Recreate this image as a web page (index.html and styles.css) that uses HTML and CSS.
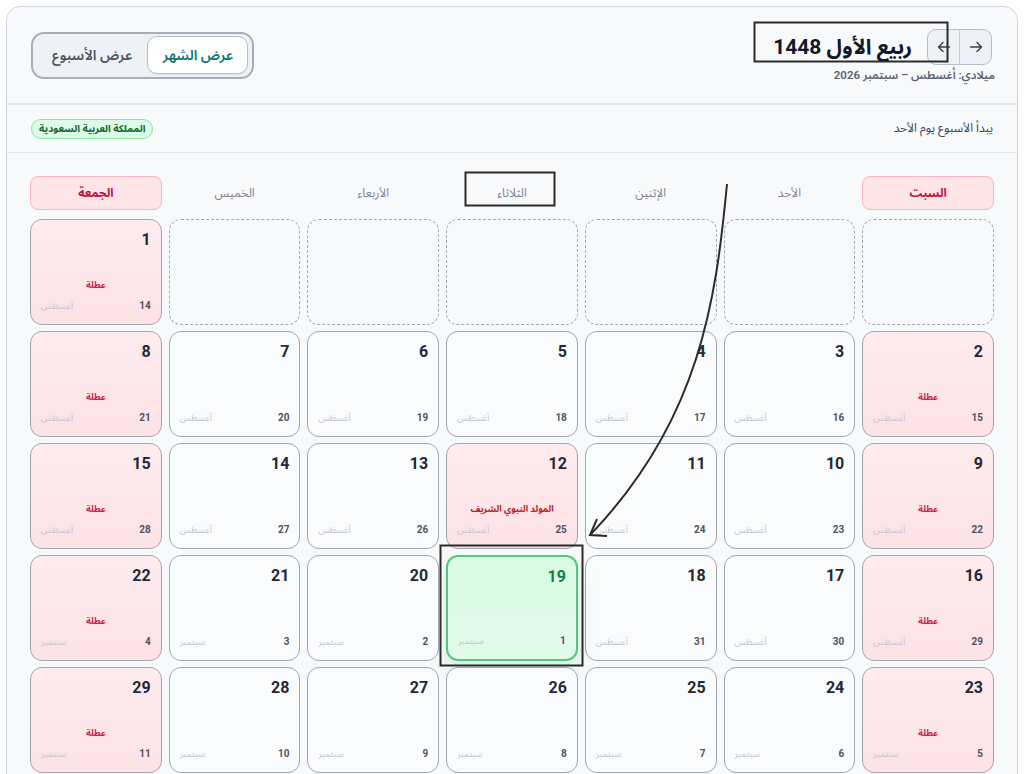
FILE: index.html
```html
<!DOCTYPE html>
<html lang="ar">
<head>
<meta charset="utf-8">
<title>التقويم الهجري</title>
<link rel="stylesheet" href="styles.css">
</head>
<body>
<div class="panel" dir="rtl">
  <header class="top">
    <div class="title-block">
      <div class="title-row">
        <div class="nav">
          <button class="nav-btn" aria-label="السابق"><svg width="14" height="14" viewBox="0 0 14 14"><path d="M1.5 7 H12.5 M8 2.5 L12.5 7 L8 11.5" fill="none" stroke="#374151" stroke-width="1.4" stroke-linecap="round" stroke-linejoin="round"/></svg></button>
          <button class="nav-btn" aria-label="التالي"><svg width="14" height="14" viewBox="0 0 14 14"><path d="M12.5 7 H1.5 M6 2.5 L1.5 7 L6 11.5" fill="none" stroke="#374151" stroke-width="1.4" stroke-linecap="round" stroke-linejoin="round"/></svg></button>
        </div>
        <h1 class="title">ربيع الأول 1448</h1>
      </div>
      <div class="sub">ميلادي: أغسطس – سبتمبر 2026</div>
    </div>
    <div class="toggle">
      <button class="tg active">عرض الشهر</button>
      <button class="tg">عرض الأسبوع</button>
    </div>
  </header>
  <div class="info">
    <span class="info-text">يبدأ الأسبوع يوم الأحد</span>
    <span class="badge">المملكة العربية السعودية</span>
  </div>
  <main class="cal">
    <div class="weekdays">
      <div class="wd wd-off">السبت</div>
      <div class="wd">الأحد</div>
      <div class="wd">الإثنين</div>
      <div class="wd">الثلاثاء</div>
      <div class="wd">الأربعاء</div>
      <div class="wd">الخميس</div>
      <div class="wd wd-off">الجمعة</div>
    </div>
    <div class="grid">
      <div class="cell empty"></div>
      <div class="cell empty"></div>
      <div class="cell empty"></div>
      <div class="cell empty"></div>
      <div class="cell empty"></div>
      <div class="cell empty"></div>
      <div class="cell off"><span class="hn">1</span><span class="lbl">عطلة</span><div class="foot"><span class="gn">14</span><span class="gm">أغسطس</span></div></div>

      <div class="cell off"><span class="hn">2</span><span class="lbl">عطلة</span><div class="foot"><span class="gn">15</span><span class="gm">أغسطس</span></div></div>
      <div class="cell"><span class="hn">3</span><div class="foot"><span class="gn">16</span><span class="gm">أغسطس</span></div></div>
      <div class="cell"><span class="hn">4</span><div class="foot"><span class="gn">17</span><span class="gm">أغسطس</span></div></div>
      <div class="cell"><span class="hn">5</span><div class="foot"><span class="gn">18</span><span class="gm">أغسطس</span></div></div>
      <div class="cell"><span class="hn">6</span><div class="foot"><span class="gn">19</span><span class="gm">أغسطس</span></div></div>
      <div class="cell"><span class="hn">7</span><div class="foot"><span class="gn">20</span><span class="gm">أغسطس</span></div></div>
      <div class="cell off"><span class="hn">8</span><span class="lbl">عطلة</span><div class="foot"><span class="gn">21</span><span class="gm">أغسطس</span></div></div>

      <div class="cell off"><span class="hn">9</span><span class="lbl">عطلة</span><div class="foot"><span class="gn">22</span><span class="gm">أغسطس</span></div></div>
      <div class="cell"><span class="hn">10</span><div class="foot"><span class="gn">23</span><span class="gm">أغسطس</span></div></div>
      <div class="cell"><span class="hn">11</span><div class="foot"><span class="gn">24</span><span class="gm">أغسطس</span></div></div>
      <div class="cell off"><span class="hn">12</span><span class="lbl lbl-event">المولد النبوي الشريف</span><div class="foot"><span class="gn">25</span><span class="gm">أغسطس</span></div></div>
      <div class="cell"><span class="hn">13</span><div class="foot"><span class="gn">26</span><span class="gm">أغسطس</span></div></div>
      <div class="cell"><span class="hn">14</span><div class="foot"><span class="gn">27</span><span class="gm">أغسطس</span></div></div>
      <div class="cell off"><span class="hn">15</span><span class="lbl">عطلة</span><div class="foot"><span class="gn">28</span><span class="gm">أغسطس</span></div></div>

      <div class="cell off"><span class="hn">16</span><span class="lbl">عطلة</span><div class="foot"><span class="gn">29</span><span class="gm">أغسطس</span></div></div>
      <div class="cell"><span class="hn">17</span><div class="foot"><span class="gn">30</span><span class="gm">أغسطس</span></div></div>
      <div class="cell"><span class="hn">18</span><div class="foot"><span class="gn">31</span><span class="gm">أغسطس</span></div></div>
      <div class="cell today"><span class="hn">19</span><div class="foot"><span class="gn">1</span><span class="gm">سبتمبر</span></div></div>
      <div class="cell"><span class="hn">20</span><div class="foot"><span class="gn">2</span><span class="gm">سبتمبر</span></div></div>
      <div class="cell"><span class="hn">21</span><div class="foot"><span class="gn">3</span><span class="gm">سبتمبر</span></div></div>
      <div class="cell off"><span class="hn">22</span><span class="lbl">عطلة</span><div class="foot"><span class="gn">4</span><span class="gm">سبتمبر</span></div></div>

      <div class="cell off"><span class="hn">23</span><span class="lbl">عطلة</span><div class="foot"><span class="gn">5</span><span class="gm">سبتمبر</span></div></div>
      <div class="cell"><span class="hn">24</span><div class="foot"><span class="gn">6</span><span class="gm">سبتمبر</span></div></div>
      <div class="cell"><span class="hn">25</span><div class="foot"><span class="gn">7</span><span class="gm">سبتمبر</span></div></div>
      <div class="cell"><span class="hn">26</span><div class="foot"><span class="gn">8</span><span class="gm">سبتمبر</span></div></div>
      <div class="cell"><span class="hn">27</span><div class="foot"><span class="gn">9</span><span class="gm">سبتمبر</span></div></div>
      <div class="cell"><span class="hn">28</span><div class="foot"><span class="gn">10</span><span class="gm">سبتمبر</span></div></div>
      <div class="cell off"><span class="hn">29</span><span class="lbl">عطلة</span><div class="foot"><span class="gn">11</span><span class="gm">سبتمبر</span></div></div>
    </div>
  </main>
</div>

<svg class="annot" width="1024" height="774" viewBox="0 0 1024 774" xmlns="http://www.w3.org/2000/svg">
  <g fill="none" stroke="#2b2b2b" stroke-width="2">
    <rect x="754.5" y="22.5" width="193" height="39"/>
    <rect x="465.5" y="172.5" width="89" height="33"/>
    <rect x="440.5" y="545.5" width="142" height="120"/>
    <path d="M727 184 C 716 300, 700 420, 591 534"/>
    <path d="M597 519 L590 535 L607 536"/>
  </g>
</svg>
</body>
</html>
```

FILE: styles.css
```css
* { box-sizing: border-box; }

html, body {
  margin: 0;
  padding: 0;
  background: #ffffff;
}

body {
  position: relative;
  width: 1024px;
  height: 774px;
  overflow: hidden;
  font-family: Roboto, "Noto Sans Arabic", "DejaVu Sans", sans-serif;
  color: #1f2937;
}

.panel {
  margin: 6px 6px 0 6px;
  height: 800px;
  border: 1px solid #cfd5df;
  border-radius: 14px;
  background: #f8f9fb;
  overflow: hidden;
}

/* ---------- header ---------- */
.top {
  height: 98px;
  display: flex;
  align-items: center;
  justify-content: space-between;
  padding: 0 25px 0 24px;
  border-bottom: 2px solid #e4e8ef;
}

.title-block {
  display: flex;
  flex-direction: column;
  align-items: flex-start;
  gap: 3px;
  padding-top: 1px;
}

.title-row {
  display: flex;
  align-items: center;
  gap: 15px;
}

.nav {
  display: flex;
  width: 65px;
  height: 36px;
  border: 1.5px solid #b8bec9;
  border-radius: 9px;
  background: #eef1f5;
  overflow: hidden;
}

.nav-btn {
  flex: 1;
  height: 100%;
  border: 0;
  background: transparent;
  padding: 0;
  display: flex;
  align-items: center;
  justify-content: center;
}

.nav-btn + .nav-btn {
  border-right: 1px solid #c8cdd6;
}

.title {
  margin: 0;
  font-size: 21px;
  font-weight: 700;
  color: #111827;
  line-height: 28px;
}

.sub {
  font-size: 11.5px;
  line-height: 14px;
  font-weight: 600;
  color: #5b6270;
  margin-right: -3px;
}

.toggle {
  display: flex;
  align-items: center;
  height: 47px;
  padding: 4px;
  border: 2px solid #a8aeb9;
  border-radius: 13px;
  background: #eef1f5;
}

.tg {
  height: 38px;
  padding: 0 14px;
  border: 1px solid transparent;
  border-radius: 10px;
  background: transparent;
  font-family: inherit;
  font-size: 14px;
  font-weight: 600;
  color: #4b5563;
}

.tg.active {
  width: 101px;
  padding: 0;
  background: #ffffff;
  border-color: #b9bec8;
  color: #0f766e;
  box-shadow: 0 1px 2px rgba(0,0,0,0.06);
}

/* ---------- info row ---------- */
.info {
  height: 48px;
  display: flex;
  align-items: center;
  justify-content: space-between;
  padding: 0 24px 0 24px;
  border-bottom: 1px solid #e4e8ef;
}

.info-text {
  font-size: 12px;
  color: #374151;
}

.badge {
  height: 20px;
  line-height: 17px;
  padding: 0 7px;
  border: 1.5px solid #86e4a6;
  border-radius: 10px;
  background: #dcfce7;
  color: #166534;
  font-size: 10px;
  font-weight: 700;
}

/* ---------- calendar ---------- */
.cal {
  padding: 23px 23px 0 23px;
}

.weekdays {
  display: grid;
  grid-template-columns: repeat(7, 1fr);
  gap: 7px;
  margin-bottom: 9px;
}

.wd {
  height: 34px;
  line-height: 32px;
  text-align: center;
  font-size: 12px;
  color: #7b8290;
  border: 1.5px solid transparent;
  border-radius: 8px;
}

.wd-off {
  background: #ffe4e8;
  border-color: #f9b4c0;
  color: #be123c;
  font-weight: 700;
}

.grid {
  display: grid;
  grid-template-columns: repeat(7, 1fr);
  grid-auto-rows: 106px;
  gap: 6px 7px;
}

.cell {
  display: flex;
  flex-direction: column;
  padding: 10px 10px 12px 10px;
  border: 1.5px solid #9fa5b1;
  border-radius: 12px;
  background: #fafbfc;
}

.cell.empty {
  border: 1.5px dashed #a2a8b4;
  background: #f7f9fc;
}

.cell.off {
  background: linear-gradient(180deg, #fdebee 0%, #fde2e6 100%);
}

.cell.today {
  border: 2px solid #55c77a;
  background: linear-gradient(180deg, #d9fae4 0%, #e2fbea 100%);
  box-shadow: 0 10px 18px rgba(74, 196, 120, 0.18);
}

.hn {
  font-size: 16px;
  font-weight: 700;
  line-height: 20px;
  color: #1f2937;
  text-align: right;
  flex: 1;
}

.today .hn {
  color: #15803d;
}

.lbl {
  text-align: center;
  font-size: 9px;
  font-weight: 700;
  color: #c81e50;
  line-height: 12px;
  margin-bottom: 9px;
}

.lbl-event {
  color: #b91c1c;
}

.foot {
  display: flex;
  justify-content: space-between;
  align-items: center;
  line-height: 12px;
}

.gn {
  font-size: 10px;
  font-weight: 700;
  color: #4b5563;
}

.gm {
  font-size: 9px;
  color: #c3c7cf;
}

/* ---------- annotation overlay ---------- */
.annot {
  position: absolute;
  top: 0;
  left: 0;
  pointer-events: none;
}
```
